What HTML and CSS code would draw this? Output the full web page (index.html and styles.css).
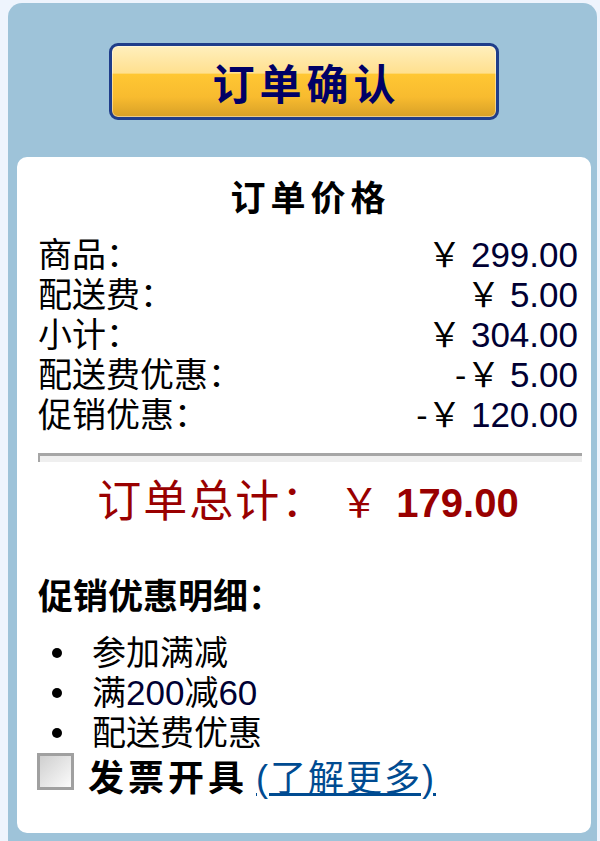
FILE: index.html
```html
<!DOCTYPE html>
<html lang="zh-CN">
<head>
    <meta charset="UTF-8">
    <meta name="viewport" content="width=device-width, initial-scale=1.0">
    <title>订单确认</title>
    <link rel="stylesheet" href="styles.css">
</head>
<body>
    <div class="panel">
        <button class="confirm-btn" type="button">订单确认</button>
        <div class="summary">
            <h2 class="summary-title">订单价格</h2>
            <div class="price-rows">
                <div class="price-row">
                    <span>商品：</span>
                    <span class="amount">￥ <span class="num">299.00</span></span>
                </div>
                <div class="price-row">
                    <span>配送费：</span>
                    <span class="amount">￥ <span class="num">5.00</span></span>
                </div>
                <div class="price-row">
                    <span>小计：</span>
                    <span class="amount">￥ <span class="num">304.00</span></span>
                </div>
                <div class="price-row">
                    <span>配送费优惠：</span>
                    <span class="amount">-￥ <span class="num">5.00</span></span>
                </div>
                <div class="price-row">
                    <span>促销优惠：</span>
                    <span class="amount">-￥ <span class="num">120.00</span></span>
                </div>
            </div>
            <div class="divider"></div>
            <div class="total">
                <span class="total-label">订单总计：</span><span class="total-yen">￥</span><span class="total-num">179.00</span>
            </div>
            <h3 class="details-title">促销优惠明细：</h3>
            <ul class="promo-list">
                <li>参加满减</li>
                <li>满<span class="num">200</span>减<span class="num">60</span></li>
                <li>配送费优惠</li>
            </ul>
            <div class="invoice">
                <input type="checkbox" class="invoice-check" id="invoice">
                <label for="invoice" class="invoice-label">发票开具</label>
                <a href="#" class="invoice-link">(了解更多)</a>
            </div>
        </div>
    </div>
</body>
</html>
```

FILE: styles.css
```css
:root {
    --page-bg: #eef4fd;
    --panel-bg: #9ec3d9;
    --btn-border: #1f3d8a;
    --btn-text: #000066;
    --num-color: #000033;
    --total-color: #990000;
    --link-color: #004b91;
}
body {
    margin: 0;
    background-color: var(--page-bg);
    font-family: "Liberation Sans", "Noto Sans CJK SC", sans-serif;
    color: #000;
    overflow: hidden;
}
.panel {
    margin: 3px 3px 0 8px;
    padding: 40px 6px 12px 9px;
    background-color: var(--panel-bg);
    border-radius: 14px 14px 0 0;
}
.confirm-btn {
    display: block;
    margin: 0 auto;
    width: 390px;
    height: 77px;
    padding: 0 0 0 5px;
    border: 3px solid var(--btn-border);
    border-radius: 9px;
    background: linear-gradient(#ffefbd 0%, #ffe08f 38%, #ffc733 40%, #f8bb2f 72%, #d7a027 100%);
    box-shadow: inset 0 0 0 1px rgba(255, 255, 255, 0.45);
    color: var(--btn-text);
    font-family: "Noto Sans CJK SC", sans-serif;
    font-size: 42px;
    font-weight: bold;
    letter-spacing: 5px;
    line-height: 1;
    cursor: pointer;
}
.summary {
    margin-top: 37px;
    padding: 22px 13px 36px 21px;
    background-color: #fff;
    border-radius: 10px;
}
.summary-title {
    margin: 0;
    padding-left: 5px;
    text-align: center;
    font-size: 35px;
    font-weight: bold;
    line-height: 40px;
    letter-spacing: 5px;
}
.price-rows {
    margin-top: 16px;
}
.price-row {
    display: flex;
    justify-content: space-between;
    font-size: 34px;
    line-height: 40px;
}
.num {
    color: var(--num-color);
    font-size: 35px;
}
.divider {
    margin: 18px -4px 0 0;
    height: 6px;
    border-top: 3px solid #a6a6a6;
    border-left: 2px solid #a6a6a6;
    background-color: #efefef;
}
.total {
    margin-top: 16px;
    text-align: center;
    color: var(--total-color);
    font-size: 40px;
    line-height: 48px;
}
.total-label {
    font-size: 44px;
    letter-spacing: 2px;
}
.total-yen {
    margin-left: 12px;
}
.total-num {
    margin-left: 17px;
    font-weight: bold;
}
.details-title {
    margin: 50px 0 0;
    font-size: 35px;
    font-weight: bold;
    line-height: 40px;
}
.promo-list {
    margin: 16px 0 0;
    padding: 0;
    list-style: none;
}
.promo-list li {
    display: flex;
    align-items: center;
    font-size: 34px;
    line-height: 40px;
}
.promo-list li::before {
    content: "";
    flex-shrink: 0;
    width: 10px;
    height: 10px;
    margin: 0 30px 0 14px;
    border-radius: 50%;
    background-color: #000;
}
.invoice {
    display: flex;
    align-items: center;
    height: 44px;
    font-size: 36px;
}
.invoice-check {
    appearance: none;
    flex-shrink: 0;
    margin: 0 14px 0 -1px;
    width: 37px;
    height: 37px;
    border: 3px solid #a0a0a0;
    background: linear-gradient(135deg, #cfcfcf, #fbfbfb);
    align-self: flex-start;
}
.invoice-label {
    font-weight: bold;
    letter-spacing: 4px;
}
.invoice-link {
    margin-left: 8px;
    color: var(--link-color);
    letter-spacing: 2px;
}
```
